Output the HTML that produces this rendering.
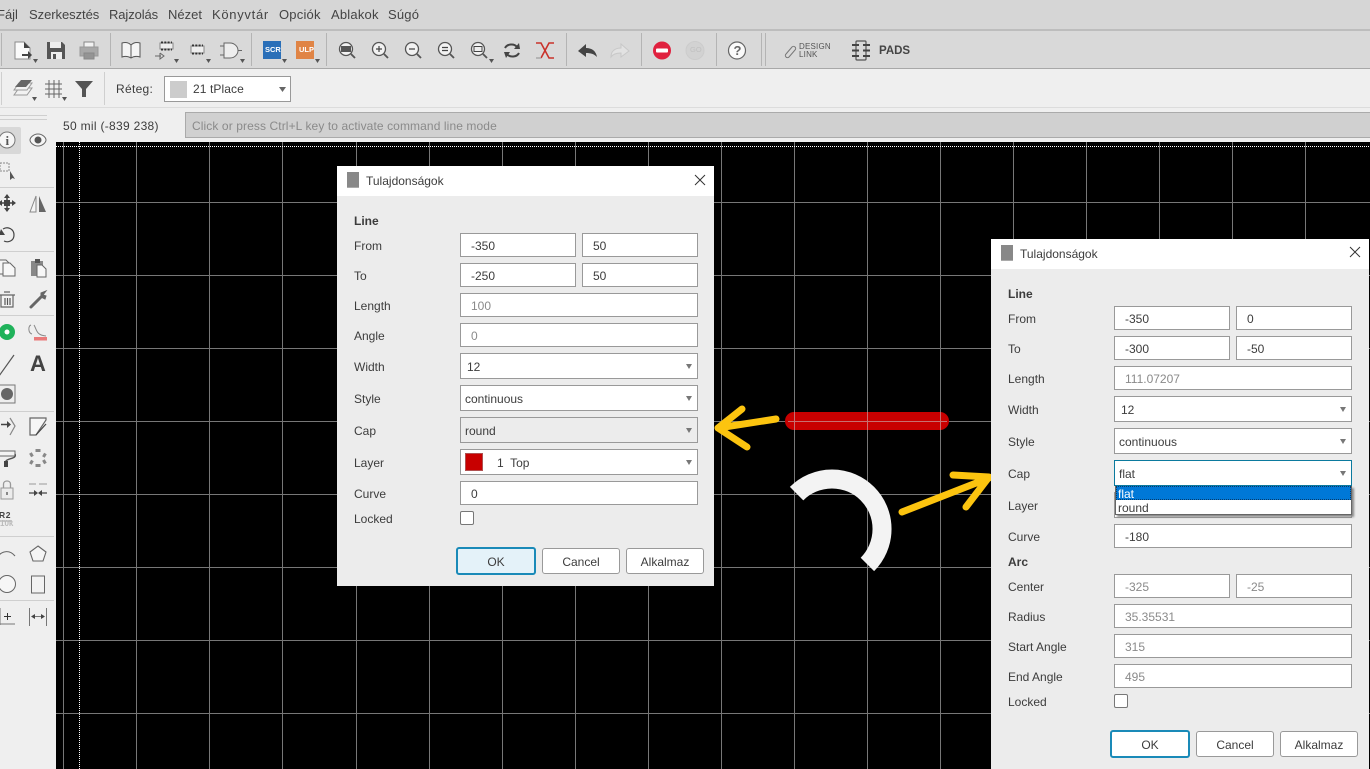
<!DOCTYPE html>
<html><head><meta charset="utf-8">
<style>
html,body{margin:0;padding:0;width:1370px;height:769px;overflow:hidden;background:#000;font-family:"Liberation Sans",sans-serif;color:#3c3c3c}
.a,.t,.i,.c,.b{position:absolute;box-sizing:border-box}
.t{white-space:nowrap;font-size:12px;line-height:16px}
.dl .t{margin-top:1px}
.m{font-size:13px;top:7px;color:#444}
.i{background:#fff;border:1px solid #999;font-size:12px;line-height:24px;padding-left:10px;height:24px;color:#3c3c3c}
.d{color:#8a8a8a}
.c{background:#fff;border:1px solid #999;font-size:12px;line-height:26px;padding-left:4px;height:26px;color:#3c3c3c}
.c:after{content:"";position:absolute;right:5px;top:10px;border:3px solid transparent;border-top:5px solid #777;border-bottom:0}
.b{background:#fff;border:1px solid #999;border-radius:3px;text-align:center;font-size:12px;line-height:26px;height:26px;width:78px;color:#3c3c3c}
.ok{border:2px solid #1a8ab8;height:28px;width:80px;line-height:26px;background:#e4f2f9}
.k{width:14px;height:14px;background:#fff;border:1px solid #777;border-radius:2px}
.dl{background:#ececec}
.tb{background:#fff;left:0;top:0;right:0;height:30px}
svg{position:absolute;left:0;top:0}
</style></head><body>
<!-- chrome -->
<div class="a" style="left:0;top:0;width:1370px;height:31px;background:#d6d6d6"></div>
<div class="a" style="left:0;top:29px;width:1370px;height:2px;background:#bdbdbd"></div>
<div class="a" style="left:0;top:31px;width:1370px;height:37px;background:#d9d9d9"></div>
<div class="a" style="left:0;top:68px;width:1370px;height:1px;background:#a8a8a8"></div>
<div class="a" style="left:0;top:69px;width:1370px;height:73px;background:#efefef"></div>
<div class="a" style="left:0;top:107px;width:1370px;height:1px;background:#dcdcdc"></div>
<div class="a" style="left:0;top:142px;width:56px;height:627px;background:#efefef"></div>
<div class="a" style="left:0;top:127px;width:21px;height:27px;background:#d8d8d8;border-radius:0 2px 2px 0"></div>
<div class="a" style="left:185px;top:112px;width:1186px;height:26px;background:#d0d0d0;border:1px solid #aaa;box-sizing:border-box"></div>

<div class="t m" style="left:-3px">Fájl</div>
<div class="t m" style="left:29px;letter-spacing:-.05px">Szerkesztés</div>
<div class="t m" style="left:109px;letter-spacing:-.1px">Rajzolás</div>
<div class="t m" style="left:168px">Nézet</div>
<div class="t m" style="left:212px;letter-spacing:.7px">Könyvtár</div>
<div class="t m" style="left:279px;letter-spacing:.2px">Opciók</div>
<div class="t m" style="left:331px;letter-spacing:.2px">Ablakok</div>
<div class="t m" style="left:388px;letter-spacing:.2px">Súgó</div>

<div class="t" style="left:116px;top:81px;letter-spacing:.3px">Réteg:</div>
<div class="a" style="left:164px;top:76px;width:127px;height:26px;background:#fff;border:1px solid #999;box-sizing:border-box"></div>
<div class="a" style="left:170px;top:81px;width:17px;height:17px;background:#ccc"></div>
<div class="t" style="left:193px;top:81px;letter-spacing:.1px">21 tPlace</div>
<div class="t" style="left:63px;top:118px;letter-spacing:.3px">50 mil (-839 238)</div>
<div class="t" style="left:192px;top:118px;color:#8a8a8a;letter-spacing:.1px">Click or press Ctrl+L key to activate command line mode</div>

<svg width="1370" height="769" viewBox="0 0 1370 769" fill="none">
<!-- canvas grid -->
<g stroke="#777" stroke-width="1">
<path d="M63.5 142V769M136.5 142V769M209.5 142V769M282.5 142V769M356.5 142V769M429.5 142V769M502.5 142V769M575.5 142V769M648.5 142V769M721.5 142V769M794.5 142V769M867.5 142V769M940.5 142V769M1013.5 142V769M1086.5 142V769M1159.5 142V769M1232.5 142V769M1305.5 142V769"/>
<path d="M56 202.5H1370M56 275.5H1370M56 348.5H1370M56 421.5H1370M56 494.5H1370M56 567.5H1370M56 640.5H1370M56 713.5H1370"/>
</g>
<path d="M56 146.5H1370M79.5 142V769" stroke="#fff" stroke-width="1" stroke-dasharray="1 1"/>
<!-- shapes -->
<rect x="785" y="412" width="164" height="18" rx="9" fill="#c80000"/>
<path d="M788 421.5H947M794.5 412V430M867.5 412V430M940.5 412V430" stroke="#c87070" stroke-width="1"/>
<path d="M796.6 493.6A50 50 0 0 1 867.4 564.4" stroke="#f3f3f3" stroke-width="19"/>
<g stroke="#fcc40f" stroke-width="7" stroke-linecap="round" stroke-linejoin="round">
<path d="M776 419L718 428M742 409L718 428L747 447"/>
<path d="M902 512L989 478M953 475L989 477L966 507"/>
</g>
<!-- toolbar separators -->
<g stroke="#b4b4b4">
<path d="M1.5 33V66M110.5 33V66M251.5 33V66M326.5 33V66M566.5 33V66M641.5 33V66M716.5 33V66M761.5 33V66M765.5 33V66"/>
</g>
<g stroke="#cfcfcf">
<path d="M1.5 72V105M104.5 72V105"/>
<path d="M0 115.5H47M0 119.5H47M0 187.5H54M0 251.5H54M0 315.5H54M0 411.5H54M0 536.5H54M0 600.5H54"/>
</g>
<!-- file icons -->
<path d="M15 42H24L30 48V59H15Z" fill="#fafafa" stroke="#8a8a8a"/>
<path d="M24 42L30 48H24Z" fill="#444"/>
<path d="M22 55H29" stroke="#444" stroke-width="2"/><path d="M28 51L32 55L28 59Z" fill="#444"/>
<path d="M47 42H62L65 45V59H47Z" fill="#555"/>
<rect x="50" y="42" width="11" height="6" fill="#eee"/><rect x="51" y="52" width="11" height="7" fill="#eee"/><rect x="53" y="54" width="3" height="5" fill="#555"/>
<rect x="84" y="42" width="10" height="6" fill="#f2f2f2" stroke="#888"/>
<rect x="80" y="47" width="18" height="9" fill="#a8a8a8" stroke="#999"/>
<rect x="84" y="53" width="10" height="6" fill="#949494" stroke="#888"/>
<!-- book and library icons -->
<path d="M131 45C128 42 125 42 122 43V57C125 56 128 56 131 58C134 56 137 56 140 57V43C137 42 134 42 131 45ZM131 45V58" fill="#f4f4f4" stroke="#555"/>
<rect x="160" y="43" width="13" height="6" fill="#eee" stroke="#888"/>
<path d="M161 42.500H172M161 49.500H172" stroke="#333" stroke-width="2" stroke-dasharray="2 1.300"/>
<path d="M155 56H161M160 53V59L164 56L160 53" stroke="#666"/>
<rect x="191" y="46" width="13" height="7" fill="#eee" stroke="#888"/>
<path d="M192 45.500H203M192 53.500H203" stroke="#333" stroke-width="2" stroke-dasharray="2 1.300"/>
<path d="M224 43H230C235 43 238 47 238 50.5C238 54 235 58 230 58H224ZM238 50.5H242M220 46H224M220 55H224" fill="#eee" stroke="#666"/>
<!-- dropdown markers -->
<g fill="#555"><path d="M33 59H38L35.500 63ZM174 59H179L176.500 63ZM206 59H211L208.500 63ZM240 59H245L242.500 63ZM282 59H287L284.500 63ZM315 59H320L317.500 63ZM489 59H494L491.500 63ZM32 97H37L34.500 101ZM62 97H67L64.500 101Z"/></g>
<rect x="263" y="41" width="18" height="18" fill="#2a6fb8"/>
<rect x="296" y="41" width="18" height="18" fill="#e08445"/>
<path d="M279 87H286L282.500 92Z" fill="#666"/>
<!-- zoom icons -->
<g stroke="#555" stroke-width="1.300" fill="#f2f2f2">
<circle cx="346" cy="49" r="6.500"/><circle cx="379" cy="49" r="6.500"/><circle cx="412" cy="49" r="6.500"/><circle cx="445" cy="49" r="6.500"/><circle cx="478" cy="49" r="6.500"/>
<path d="M351 54L355 58M384 54L388 58M417 54L421 58M450 54L454 58M483 54L487 58" stroke-width="1.800"/>
</g>
<rect x="341" y="46" width="10" height="6" fill="#555"/>
<path d="M376 49H382M379 46V52M409 49H415M442 47.500H448M442 50.500H448" stroke="#444" stroke-width="1.200"/>
<rect x="474" y="46.500" width="8" height="5" stroke="#444" fill="#eee"/>
<!-- redraw -->
<path d="M505 48C507 44 514 43 517 47M519 53C517 57 510 58 507 54" stroke="#444" stroke-width="2"/>
<path d="M514 49L520 49L519 43ZM504 52L510 52L506 58Z" fill="#444"/>
<!-- ratsnest -->
<path d="M536 43H541L549 58H554" stroke="#c9322b" stroke-width="1.600"/>
<path d="M554 43H549L541 58" stroke="#c9322b" stroke-width="1.600"/>
<path d="M536 58H541" stroke="#aaa" stroke-width="1.600"/>
<!-- undo redo -->
<path d="M578 51L586 44V48C592 48 596 51 597 57C594 54 591 53 586 53V57Z" fill="#444"/>
<path d="M629 51L621 44V48C615 48 611 51 611 57C613 54 616 53 621 53V57Z" fill="#e2e2e2" stroke="#c8c8c8"/>
<!-- stop go help -->
<circle cx="662" cy="50.500" r="9" fill="#e0213f"/><rect x="656" y="48.500" width="12" height="4" rx="1" fill="#fff"/>
<circle cx="695" cy="50.500" r="9" fill="#d2d2d2" stroke="#cccccc"/>
<circle cx="737" cy="50.500" r="8.500" fill="#fafafa" stroke="#666" stroke-width="1.200"/>
<!-- design link, pads -->
<path d="M786 54L792 47C794 45 797 48 795 50L789 57C787 59 784 56 786 54Z" stroke="#777"/>
<rect x="856" y="41" width="10" height="19" rx="1" stroke="#555" stroke-width="1.200"/>
<path d="M852 45H859M852 50.500H859M852 56H859M863 45H870M863 50.500H870M863 56H870" stroke="#444" stroke-width="2"/>
<!-- layer/grid/funnel -->
<path d="M14 95L19 88H32L27 95Z" fill="#f2f2f2" stroke="#999"/>
<path d="M14 90L19 83H32L27 90Z" fill="#f2f2f2" stroke="#999"/>
<path d="M15 87L21 80H32L26 87Z" fill="#666"/>
<path d="M45 84H62M45 89H62M45 94H62M49 80V98M54 80V98M59 80V98" stroke="#666"/>
<path d="M75 81H93L86 89V97H82V89Z" fill="#555"/>
<!-- left tool icons -->
<circle cx="7" cy="140" r="8" fill="#f6f6f6" stroke="#777"/>
<path d="M38 134C33 134 30 138 30 140C30 142 33 146 38 146C43 146 46 142 46 140C46 138 43 134 38 134Z" stroke="#666" fill="#f5f5f5"/><circle cx="38" cy="140" r="3.500" fill="#555"/>
<rect x="0" y="163" width="9" height="8" stroke="#888" stroke-dasharray="2 1"/>
<path d="M10 171V180L12.500 178L15 179Z" fill="#555"/>
<path d="M7 195V211M-1 203H15" stroke="#444" stroke-width="1.500"/>
<path d="M7 194L10 198H4ZM7 212L10 208H4ZM-2 203L2 200V206ZM16 203L12 200V206Z" fill="#444"/>
<rect x="4" y="200" width="6" height="6" fill="#444"/>
<path d="M30 212L36 196V212Z" fill="#f5f5f5" stroke="#888"/><path d="M39 196L46 212H39Z" fill="#666"/>
<path d="M3 229C8 226 14 229 14 235C14 241 8 243 4 241" stroke="#444" stroke-width="1.200"/>
<path d="M-1 235L5 235L1 229Z" fill="#444"/>
<path d="M-1 260H6L10 264V274H0" fill="#f5f5f5" stroke="#666"/>
<path d="M3 263H10L15 268V276H3Z" fill="#f7f7f7" stroke="#666"/>
<rect x="31" y="261" width="12" height="15" fill="#888"/><rect x="35" y="259" width="5" height="4" fill="#555"/>
<path d="M37 265H42L46 269V277H37Z" fill="#f7f7f7" stroke="#666"/>
<path d="M1 295H13V307H1ZM-1 295H15M4 292H10" stroke="#666" fill="#f3f3f3" stroke-width="1.200"/>
<path d="M5 298V305M7.500 298V305M10 298V305" stroke="#555" stroke-width="1.200"/>
<path d="M31 307L41 297" stroke="#666" stroke-width="3" stroke-linecap="round"/>
<path d="M41 297L41 293L46 291L43 295L46 296L45 299Z" fill="#666" stroke="#666"/>
<circle cx="7" cy="332" r="8" fill="#1fb25a"/><circle cx="7" cy="332" r="2.500" fill="#fff"/>
<path d="M31 325C28 326 28 333 32 334M34 325C37 330 36 335 46 336" stroke="#888"/>
<rect x="34" y="337" width="13" height="3.500" fill="#e97a7a"/>
<path d="M-1 376L14 355" stroke="#555" stroke-width="1.200"/>
<rect x="-2" y="385" width="17" height="18" fill="#eee" stroke="#777"/>
<circle cx="7" cy="394" r="6" fill="#666"/>
<path d="M1 424.500H8" stroke="#444" stroke-width="1.500"/><path d="M7 421L11 424.500L7 428Z" fill="#444"/>
<path d="M10 418L15 426L10 435" stroke="#888" stroke-width="1.200"/>
<path d="M30 435V418H46V420L36 435Z" stroke="#666" fill="#f6f6f6" stroke-width="1.200"/>
<path d="M36 435L46 424" stroke="#444" stroke-width="1.200"/>
<path d="M-1 451H15V456H-1Z" fill="#f4f4f4" stroke="#666"/><path d="M15 454C17 459 8 458 6 461V465" stroke="#555" stroke-width="1.500"/>
<rect x="4" y="461" width="4" height="6" fill="#444"/>
<g fill="#888"><rect x="35.500" y="449" width="5" height="3"/><rect x="35.500" y="464" width="5" height="3"/><rect x="43" y="453" width="3" height="4" transform="rotate(30 44 455)"/><rect x="43" y="460" width="3" height="4" transform="rotate(-30 44 462)"/><rect x="30" y="453" width="3" height="4" transform="rotate(-30 31 455)"/><rect x="30" y="460" width="3" height="4" transform="rotate(30 31 462)"/></g>
<rect x="1" y="488" width="12" height="11" fill="#ececec" stroke="#999"/><path d="M3.500 488V484C3.500 480 10.500 480 10.500 484V488" stroke="#999" stroke-width="1.300"/><rect x="6" y="492" width="2" height="3" fill="#888"/>
<path d="M29 484H36M39 484H47" stroke="#999"/><path d="M29 493H35M40 493H47" stroke="#444" stroke-width="1.300"/><path d="M34 490L38 493L34 496ZM42 490L38 493L42 496Z" fill="#444"/>
<path d="M0 521H12" stroke="#999"/>
<path d="M-3 557C3 550 10 550 15 556" stroke="#666" stroke-width="1.100"/>
<path d="M38 546L46 552L43 561H33L30 552Z" fill="#f5f5f5" stroke="#666" stroke-width="1.100"/>
<circle cx="7" cy="584" r="8.500" fill="#f6f6f6" stroke="#666"/>
<rect x="31.500" y="576" width="13" height="17" fill="#f2f2f2" stroke="#666"/>
<path d="M0 608V625M-1 624H15" stroke="#777"/>
<path d="M4 616.500H11M7.500 613V620" stroke="#333"/>
<path d="M29.500 608V626M46.500 608V626M32 616.500H44" stroke="#777"/>
<path d="M31 616.500L35 614V619ZM45 616.500L41 614V619Z" fill="#444"/>
</svg>
<div class="t" style="left:5.500px;top:133px;font:bold 13px 'Liberation Serif',serif;color:#555">i</div>
<div class="t" style="left:30px;top:352px;font-size:22px;line-height:24px;font-weight:bold;color:#444">A</div>
<div class="t" style="left:-1px;top:510px;font-size:8.500px;line-height:10px;font-weight:bold;letter-spacing:.6px;color:#444">R2</div>
<div class="t" style="left:0;top:519px;font-size:8px;line-height:10px;font-weight:bold;color:#bbb">10k</div>
<div class="t" style="left:265px;top:44px;font-size:7.500px;line-height:12px;font-weight:bold;color:#fff">SCR</div>
<div class="t" style="left:299px;top:44px;font-size:7.500px;line-height:12px;font-weight:bold;color:#fff">ULP</div>
<div class="t" style="left:690px;top:44px;font-size:7.500px;line-height:12px;color:#c0c0c0">GO</div>
<div class="t" style="left:733.500px;top:43px;font-size:13px;line-height:15px;font-weight:bold;color:#666">?</div>
<div class="t" style="left:799px;top:43px;font-size:8px;line-height:8px;color:#555;letter-spacing:.2px">DESIGN<br>LINK</div>
<div class="t" style="left:879px;top:44px;font-size:11.500px;line-height:14px;font-weight:bold;color:#444">PADS</div>

<!-- dialog 1 -->
<div class="a dl" style="left:337px;top:166px;width:377px;height:420px">
<div class="a tb"></div>
<svg width="377" height="30" fill="none"><path d="M10 6H22V21H10Z" fill="#888"/><path d="M10 21.500H22" stroke="#aaa"/><path d="M358 9L368 19M368 9L358 19" stroke="#333"/></svg>
<div class="t" style="left:29px;top:6px">Tulajdonságok</div>
<div class="t" style="left:17px;top:46px;font-weight:bold">Line</div>
<div class="t" style="left:17px;top:71px">From</div>
<div class="t" style="left:17px;top:101px">To</div>
<div class="t" style="left:17px;top:131px">Length</div>
<div class="t" style="left:17px;top:161px">Angle</div>
<div class="t" style="left:17px;top:192px">Width</div>
<div class="t" style="left:17px;top:224px">Style</div>
<div class="t" style="left:17px;top:256px">Cap</div>
<div class="t" style="left:17px;top:288px">Layer</div>
<div class="t" style="left:17px;top:319px">Curve</div>
<div class="t" style="left:17px;top:344px">Locked</div>
<div class="i" style="left:123px;top:67px;width:116px">-350</div>
<div class="i" style="left:245px;top:67px;width:116px">50</div>
<div class="i" style="left:123px;top:97px;width:116px">-250</div>
<div class="i" style="left:245px;top:97px;width:116px">50</div>
<div class="i d" style="left:123px;top:127px;width:238px">100</div>
<div class="i d" style="left:123px;top:157px;width:238px">0</div>
<div class="c" style="left:123px;top:187px;width:238px;padding-left:6px">12</div>
<div class="c" style="left:123px;top:219px;width:238px">continuous</div>
<div class="c d" style="left:123px;top:251px;width:238px;background:#ececec">round</div>
<div class="c" style="left:123px;top:283px;width:238px;padding-left:36px">1&nbsp; Top</div>
<div class="a" style="left:128px;top:287px;width:18px;height:18px;background:#c80000;border:1px solid #b05050;box-sizing:border-box"></div>
<div class="i" style="left:123px;top:315px;width:238px">0</div>
<div class="a k" style="left:123px;top:345px"></div>
<div class="b ok" style="left:119px;top:381px">OK</div>
<div class="b" style="left:205px;top:382px">Cancel</div>
<div class="b" style="left:289px;top:382px">Alkalmaz</div>
</div>

<!-- dialog 2 -->
<div class="a dl" style="left:991px;top:239px;width:378px;height:530px">
<div class="a tb"></div>
<svg width="378" height="30" fill="none"><path d="M10 6H22V21H10Z" fill="#888"/><path d="M10 21.500H22" stroke="#aaa"/><path d="M359 8L369 18M369 8L359 18" stroke="#333"/></svg>
<div class="t" style="left:29px;top:6px">Tulajdonságok</div>
<div class="t" style="left:17px;top:46px;font-weight:bold">Line</div>
<div class="t" style="left:17px;top:71px">From</div>
<div class="t" style="left:17px;top:101px">To</div>
<div class="t" style="left:17px;top:131px">Length</div>
<div class="t" style="left:17px;top:162px">Width</div>
<div class="t" style="left:17px;top:194px">Style</div>
<div class="t" style="left:17px;top:226px">Cap</div>
<div class="t" style="left:17px;top:258px">Layer</div>
<div class="t" style="left:17px;top:289px">Curve</div>
<div class="t" style="left:17px;top:314px;font-weight:bold">Arc</div>
<div class="t" style="left:17px;top:339px">Center</div>
<div class="t" style="left:17px;top:369px">Radius</div>
<div class="t" style="left:17px;top:399px">Start Angle</div>
<div class="t" style="left:17px;top:429px">End Angle</div>
<div class="t" style="left:17px;top:454px">Locked</div>
<div class="i" style="left:123px;top:67px;width:116px">-350</div>
<div class="i" style="left:245px;top:67px;width:116px">0</div>
<div class="i" style="left:123px;top:97px;width:116px">-300</div>
<div class="i" style="left:245px;top:97px;width:116px">-50</div>
<div class="i d" style="left:123px;top:127px;width:238px">111.07207</div>
<div class="c" style="left:123px;top:157px;width:238px;padding-left:6px">12</div>
<div class="c" style="left:123px;top:189px;width:238px">continuous</div>
<div class="c" style="left:123px;top:221px;width:238px;border-color:#0b7a9e">flat</div>
<div class="c" style="left:123px;top:253px;width:238px"></div>
<div class="i" style="left:123px;top:285px;width:238px">-180</div>
<div class="i d" style="left:123px;top:335px;width:116px">-325</div>
<div class="i d" style="left:245px;top:335px;width:116px">-25</div>
<div class="i d" style="left:123px;top:365px;width:238px">35.35531</div>
<div class="i d" style="left:123px;top:395px;width:238px">315</div>
<div class="i d" style="left:123px;top:425px;width:238px">495</div>
<div class="a k" style="left:123px;top:455px"></div>
<div class="b ok" style="left:119px;top:491px;background:#fff">OK</div>
<div class="b" style="left:205px;top:492px">Cancel</div>
<div class="b" style="left:289px;top:492px">Alkalmaz</div>
<!-- dropdown -->
<div class="a" style="left:124px;top:247px;width:237px;height:29px;background:#fff;border:1px solid #666;border-top:0;box-sizing:border-box;box-shadow:2px 2px 2px #888">
<div class="a" style="left:0;top:0;width:235px;height:14px;background:#0078d7;color:#fff;font-size:12px;line-height:16px;padding-left:2px;outline:1px dotted #0a3a66;outline-offset:-1px">flat</div>
<div class="a" style="left:0;top:14px;width:235px;height:14px;color:#3c3c3c;font-size:12px;line-height:16px;padding-left:2px">round</div>
</div>
</div>
</body></html>
